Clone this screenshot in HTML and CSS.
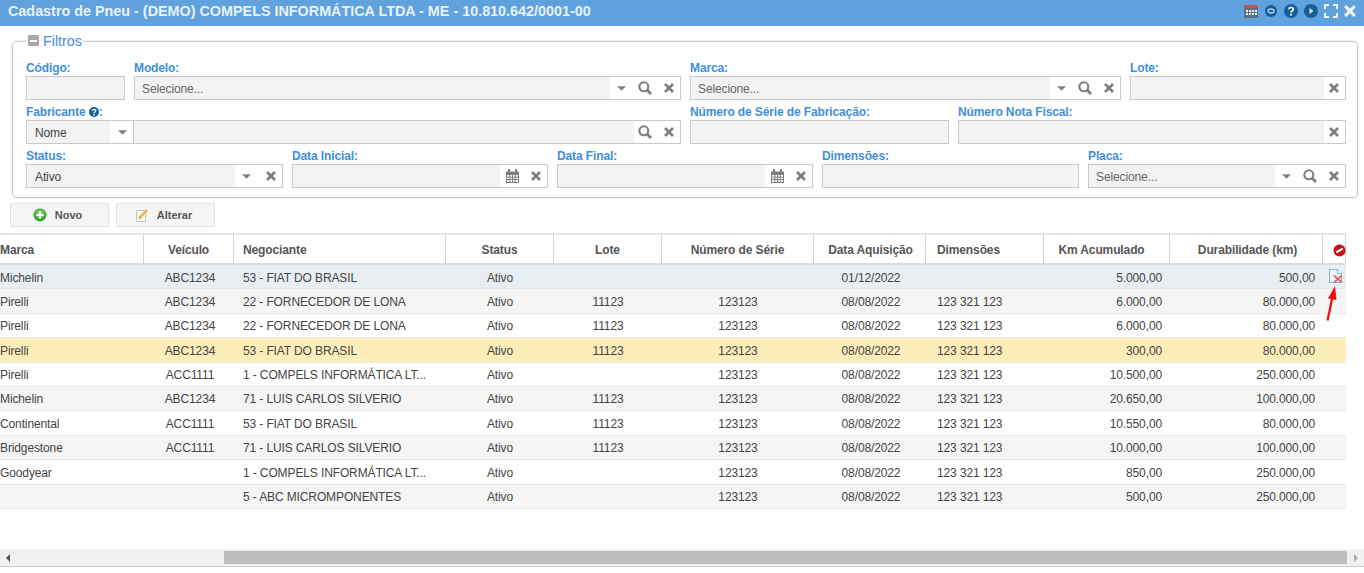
FILE: index.html
```html
<!DOCTYPE html>
<html lang="pt-BR">
<head>
<meta charset="utf-8">
<title>Cadastro de Pneu</title>
<link rel="stylesheet" href="styles.css">
</head>
<body>
<svg class="sprites" xmlns="http://www.w3.org/2000/svg">
  <symbol id="i-x" viewBox="0 0 10 10"><path d="M1 1l8 8M9 1l-8 8" fill="none" stroke="currentColor" stroke-width="2.700"/></symbol>
  <symbol id="i-search" viewBox="0 0 14 14"><circle cx="5.800" cy="5.800" r="4.500" fill="none" stroke="currentColor" stroke-width="2.100"/><path d="M9 9l4 4" stroke="currentColor" stroke-width="2.800"/></symbol>
  <symbol id="i-caret" viewBox="0 0 10 5"><path d="M0 0h10L5 5z" fill="currentColor"/></symbol>
  <symbol id="i-cal" viewBox="0 0 13 14"><path d="M0 2.500h13V14H0z" fill="currentColor"/><path d="M3 0v4M10 0v4" stroke="currentColor" stroke-width="2"/><path d="M1 6h11v7H1z" fill="#fff"/><path d="M1 8.200h11M1 10.500h11M3.800 6v7M6.500 6v7M9.200 6v7" stroke="currentColor"/></symbol>
</svg>

<header class="titlebar">
  <h1 class="title">Cadastro de Pneu - (DEMO) COMPELS INFORMÁTICA LTDA - ME - 10.810.642/0001-00</h1>
  <div class="title-tools">
    <svg class="tool" viewBox="0 0 14 14"><path d="M0 1h14v13H0z" fill="#5d6f80"/><path d="M0 1h14v3H0z" fill="#c8504f"/><path d="M2 6h2v2H2zM5 6h2v2H5zM8 6h2v2H8zM11 6h2v2h-2zM2 9h2v2H2zM5 9h2v2H5zM8 9h2v2H8zM11 9h2v2h-2z" fill="#e9eef2"/></svg>
    <svg class="tool" viewBox="0 0 14 14"><circle cx="7" cy="7" r="6" fill="#155f96"/><ellipse cx="7" cy="7" rx="3" ry="2" fill="none" stroke="#b7d6ec" stroke-width="1.300"/></svg>
    <svg class="tool" viewBox="0 0 14 14"><circle cx="7" cy="7" r="7" fill="#155f96"/><path d="M4.800 5.300C5 2.900 9.300 3 9.300 5.400 9.300 7 7 7 7 8.600" fill="none" stroke="#fff" stroke-width="1.600"/><path d="M6.100 9.700h1.800v1.700H6.100z" fill="#fff"/></svg>
    <svg class="tool" viewBox="0 0 14 14"><circle cx="7" cy="7" r="7" fill="#155f96"/><path d="M5.500 4l4 3-4 3z" fill="#d5e7f4"/></svg>
    <svg class="tool" viewBox="0 0 14 14"><path d="M1 5V1h4M9 1h4v4M13 9v4H9M5 13H1V9" fill="none" stroke="#eef4fa" stroke-width="2"/></svg>
    <svg class="tool tool-x" viewBox="0 0 10 10"><use href="#i-x"/></svg>
  </div>
</header>

<fieldset class="filters">
  <legend class="filters-legend"><span class="collapse"><span class="collapse-bar"></span></span>Filtros</legend>

  <div class="filter-row">
    <div class="field w-codigo"><label class="label">Código:</label><div class="input"></div></div>
    <div class="field w-modelo"><label class="label">Modelo:</label>
      <div class="input"><span class="value muted">Selecione...</span>
        <span class="addons addons-full"><svg class="ic-caret"><use href="#i-caret"/></svg><svg class="ic-search"><use href="#i-search"/></svg><svg class="ic-x"><use href="#i-x"/></svg></span></div></div>
    <div class="field w-marca"><label class="label">Marca:</label>
      <div class="input"><span class="value muted">Selecione...</span>
        <span class="addons addons-full"><svg class="ic-caret"><use href="#i-caret"/></svg><svg class="ic-search"><use href="#i-search"/></svg><svg class="ic-x"><use href="#i-x"/></svg></span></div></div>
    <div class="field w-lote"><label class="label">Lote:</label>
      <div class="input"><span class="addons"><svg class="ic-x"><use href="#i-x"/></svg></span></div></div>
  </div>

  <div class="filter-row">
    <div class="field w-modelo-full"><label class="label">Fabricante <svg class="help" viewBox="0 0 14 14"><circle cx="7" cy="7" r="7" fill="#155f96"/><path d="M4.500 5.300C4.700 2.600 9.500 2.700 9.500 5.300 9.500 7 7 7 7 8.600" fill="none" stroke="#fff" stroke-width="1.800"/><path d="M6 9.800h2v2H6z" fill="#fff"/></svg>:</label>
      <div class="combo">
        <div class="input input-type"><span class="value">Nome</span><span class="addons"><svg class="ic-caret"><use href="#i-caret"/></svg></span></div>
        <div class="input input-fill"><span class="addons addons-search"><svg class="ic-search"><use href="#i-search"/></svg><svg class="ic-x"><use href="#i-x"/></svg></span></div>
      </div></div>
    <div class="field w-serie"><label class="label">Número de Série de Fabricação:</label><div class="input"></div></div>
    <div class="field w-nota"><label class="label">Número Nota Fiscal:</label>
      <div class="input"><span class="addons"><svg class="ic-x"><use href="#i-x"/></svg></span></div></div>
  </div>

  <div class="filter-row">
    <div class="field w-status"><label class="label">Status:</label>
      <div class="input"><span class="value">Ativo</span><span class="addons addons-status"><svg class="ic-caret"><use href="#i-caret"/></svg><svg class="ic-x"><use href="#i-x"/></svg></span></div></div>
    <div class="field w-data"><label class="label">Data Inicial:</label>
      <div class="input"><span class="addons addons-date"><svg class="ic-cal"><use href="#i-cal"/></svg><svg class="ic-x"><use href="#i-x"/></svg></span></div></div>
    <div class="field w-data"><label class="label">Data Final:</label>
      <div class="input"><span class="addons addons-date"><svg class="ic-cal"><use href="#i-cal"/></svg><svg class="ic-x"><use href="#i-x"/></svg></span></div></div>
    <div class="field w-dim"><label class="label">Dimensões:</label><div class="input"></div></div>
    <div class="field w-placa"><label class="label">Placa:</label>
      <div class="input"><span class="value muted">Selecione...</span>
        <span class="addons addons-full"><svg class="ic-caret"><use href="#i-caret"/></svg><svg class="ic-search"><use href="#i-search"/></svg><svg class="ic-x"><use href="#i-x"/></svg></span></div></div>
  </div>
</fieldset>

<div class="actions">
  <button class="btn" type="button">
    <svg class="btn-ic" viewBox="0 0 14 14"><circle cx="7" cy="7" r="6.500" fill="#3fa535"/><circle cx="7" cy="6" r="4.500" fill="#7ed06a" opacity=".7"/><path d="M7 3.500v7M3.500 7h7" stroke="#fff" stroke-width="2.200"/></svg>Novo</button>
  <button class="btn" type="button">
    <svg class="btn-ic" viewBox="0 0 14 14"><path d="M1.500 2.500h9v11h-9z" fill="#fafafa" stroke="#c4c4c4"/><path d="M3.500 11l1-3L11 1l2 2-6.500 7z" fill="#edb850"/><path d="M3.500 11l1-3 2 2z" fill="#c98f3a"/></svg>Alterar</button>
</div>

<div class="grid">
  <table class="table">
    <colgroup>
      <col class="c1"><col class="c2"><col class="c3"><col class="c4"><col class="c5"><col class="c6"><col class="c7"><col class="c8"><col class="c9"><col class="c10"><col class="c11">
    </colgroup>
    <thead>
      <tr>
        <th class="left">Marca</th><th>Veículo</th><th class="left pad">Negociante</th><th>Status</th><th>Lote</th><th>Número de Série</th><th>Data Aquisição</th><th>Dimensões</th><th>Km Acumulado</th><th>Durabilidade (km)</th>
        <th><svg class="ic-block" viewBox="0 0 14 14"><circle cx="7" cy="7" r="6.500" fill="#c6101a"/><path d="M3.500 9L10.500 5" stroke="#fff" stroke-width="2.400"/></svg></th>
      </tr>
    </thead>
    <tbody>
      <tr class="selected"><td>Michelin</td><td class="c">ABC1234</td><td class="pad">53 - FIAT DO BRASIL</td><td class="c">Ativo</td><td class="c"></td><td class="c"></td><td class="c">01/12/2022</td><td></td><td class="r">5.000,00</td><td class="r">500,00</td>
        <td class="cell-ic"><svg class="ic-del" viewBox="0 0 14 14"><path d="M.5.500h8l4 4v9H.5z" fill="#eef3fb" stroke="#8fb0d8"/><path d="M8.500.500v4h4" fill="#fff" stroke="#8fb0d8"/><path d="M5 6.500l8 7M13 6.500l-8 7" stroke="#dc6a70" stroke-width="2"/></svg></td></tr>
      <tr class="alt"><td>Pirelli</td><td class="c">ABC1234</td><td class="pad">22 - FORNECEDOR DE LONA</td><td class="c">Ativo</td><td class="c">11123</td><td class="c">123123</td><td class="c">08/08/2022</td><td>123 321 123</td><td class="r">6.000,00</td><td class="r">80.000,00</td><td></td></tr>
      <tr><td>Pirelli</td><td class="c">ABC1234</td><td class="pad">22 - FORNECEDOR DE LONA</td><td class="c">Ativo</td><td class="c">11123</td><td class="c">123123</td><td class="c">08/08/2022</td><td>123 321 123</td><td class="r">6.000,00</td><td class="r">80.000,00</td><td></td></tr>
      <tr class="warn"><td>Pirelli</td><td class="c">ABC1234</td><td class="pad">53 - FIAT DO BRASIL</td><td class="c">Ativo</td><td class="c">11123</td><td class="c">123123</td><td class="c">08/08/2022</td><td>123 321 123</td><td class="r">300,00</td><td class="r">80.000,00</td><td></td></tr>
      <tr><td>Pirelli</td><td class="c">ACC1111</td><td class="pad">1 - COMPELS INFORMÁTICA LT...</td><td class="c">Ativo</td><td class="c"></td><td class="c">123123</td><td class="c">08/08/2022</td><td>123 321 123</td><td class="r">10.500,00</td><td class="r">250.000,00</td><td></td></tr>
      <tr class="alt"><td>Michelin</td><td class="c">ABC1234</td><td class="pad">71 - LUIS CARLOS SILVERIO</td><td class="c">Ativo</td><td class="c">11123</td><td class="c">123123</td><td class="c">08/08/2022</td><td>123 321 123</td><td class="r">20.650,00</td><td class="r">100.000,00</td><td></td></tr>
      <tr><td>Continental</td><td class="c">ACC1111</td><td class="pad">53 - FIAT DO BRASIL</td><td class="c">Ativo</td><td class="c">11123</td><td class="c">123123</td><td class="c">08/08/2022</td><td>123 321 123</td><td class="r">10.550,00</td><td class="r">80.000,00</td><td></td></tr>
      <tr class="alt"><td>Bridgestone</td><td class="c">ACC1111</td><td class="pad">71 - LUIS CARLOS SILVERIO</td><td class="c">Ativo</td><td class="c">11123</td><td class="c">123123</td><td class="c">08/08/2022</td><td>123 321 123</td><td class="r">10.000,00</td><td class="r">100.000,00</td><td></td></tr>
      <tr><td>Goodyear</td><td class="c"></td><td class="pad">1 - COMPELS INFORMÁTICA LT...</td><td class="c">Ativo</td><td class="c"></td><td class="c">123123</td><td class="c">08/08/2022</td><td>123 321 123</td><td class="r">850,00</td><td class="r">250.000,00</td><td></td></tr>
      <tr class="alt"><td></td><td class="c"></td><td class="pad">5 - ABC MICROMPONENTES</td><td class="c">Ativo</td><td class="c"></td><td class="c">123123</td><td class="c">08/08/2022</td><td>123 321 123</td><td class="r">500,00</td><td class="r">250.000,00</td><td></td></tr>
    </tbody>
  </table>
  <svg class="arrow" viewBox="0 0 14 35"><path d="M2.500 34.500L7.500 11" stroke="#f00a14" stroke-width="2.200" fill="none"/><path d="M10 0L3 12.500 11.500 14z" fill="#f00a14"/></svg>
</div>

<div class="hscroll">
  <span class="arrow-l"></span>
  <div class="track"><div class="thumb"></div></div>
  <span class="arrow-r"></span>
</div>
</body>
</html>
```
FILE: styles.css
```css
* { box-sizing: border-box; }
html, body { margin: 0; padding: 0; }
body {
  width: 1364px;
  height: 573px;
  overflow: hidden;
  background: #fff;
  font-family: "Liberation Sans", Arial, sans-serif;
  font-size: 12px;
  letter-spacing: -.12px;
  color: #444;
}
.sprites { display: none; }

.titlebar {
  height: 26px;
  background: #5fa2dd;
  display: flex;
  align-items: center;
  justify-content: space-between;
  padding: 0 8px 4px;
}
.title {
  margin: 0;
  font-size: 14.37px;
  font-weight: bold;
  letter-spacing: 0;
  color: #e9f1f9;
  white-space: nowrap;
}
.title-tools { display: flex; align-items: center; gap: 6px; }
.tool { width: 14px; height: 14px; display: block; }
.tool-x { width: 12px; height: 12px; color: #eef4fa; }

.filters {
  margin: 8px 6px 0 12px;
  padding: 7px 11px 0 13px;
  height: 164px;
  border: 1px solid #c9c9c9;
  border-radius: 5px;
  box-shadow: 0 0 2px rgba(0,0,0,.2);
  display: block;
  min-width: 0;
}
.filters-legend {
  padding: 0 1px 0 2px;
  margin-left: 0;
  font-size: 14.3px;
  letter-spacing: 0;
  color: #3f8fdc;
  line-height: 15px;
  display: flex;
  align-items: center;
  gap: 4px;
}
.collapse {
  width: 11px;
  height: 11px;
  background: #a8a8a8;
  border-radius: 1px;
  display: flex;
  align-items: center;
  justify-content: center;
  margin-top: -2px;
}
.collapse-bar { width: 7px; height: 2px; background: #fff; }

.filter-row { display: flex; gap: 9px; height: 44px; padding-top: 5px; }
.field { display: flex; flex-direction: column; flex: none; }
.label {
  height: 15px;
  line-height: 15px;
  font-size: 12px;
  font-weight: bold;
  color: #3f8fdc;
  white-space: nowrap;
  display: block;
}
.input {
  height: 24px;
  border: 1px solid #c9c9c9;
  background: #f3f3f3;
  display: flex;
  align-items: center;
}
.value { padding: 2px 0 0 8px; color: #444; flex: 1; white-space: nowrap; }
.muted { color: #666; padding-left: 7px; }
.addons {
  margin-left: auto;
  height: 22px;
  background: #fff;
  display: flex;
  align-items: center;
  padding: 0 6px 0 5px;
  color: #7f7f7f;
}
.addons svg { display: block; flex: none; }
.ic-caret { width: 9px; height: 5px; }
.ic-search { width: 14px; height: 14px; }
.ic-x { width: 10px; height: 10px; }
.ic-cal { width: 13px; height: 14px; }
.addons-full { width: 70px; padding: 0 6px 0 7px; justify-content: space-between; }
.addons-search { width: 46px; padding: 0 6px 0 4px; justify-content: space-between; }
.addons-date { width: 47px; padding: 0 6px; justify-content: space-between; }
.addons-status { width: 47px; padding: 0 6px 0 7px; justify-content: space-between; }

.w-codigo { width: 99px; }
.w-modelo { width: 547px; }
.w-marca { width: 431px; }
.w-lote { width: 216px; }
.w-modelo-full { width: 655px; }
.w-serie { width: 259px; }
.w-nota { width: 388px; }
.w-status { width: 257px; }
.w-data { width: 256px; }
.w-dim { width: 257px; }
.w-placa { width: 258px; }

.combo { display: flex; }
.input-type { width: 108px; flex: none; }
.input-type .addons { width: 23px; padding: 0 0 0 8px; }
.input-fill { flex: 1; border-left: 0; }
.help { width: 10px; height: 10px; vertical-align: -1px; }

.actions { display: flex; gap: 7px; padding: 5px 0 0 10px; }
.btn {
  width: 99px;
  height: 24px;
  background: #f5f5f5;
  border: 1px solid #e1e1e1;
  border-radius: 2px;
  font: bold 11px "Liberation Sans", Arial, sans-serif;
  color: #555;
  display: flex;
  align-items: center;
  justify-content: center;
  gap: 8px;
  padding: 0 4px 0 0;
}
.btn-ic { width: 14px; height: 14px; }

.grid { position: relative; margin-top: 6px; height: 316px; }
.table {
  table-layout: fixed;
  border-collapse: separate;
  border-spacing: 0;
  width: 1346px;
}
.c1 { width: 144px; } .c2 { width: 90px; } .c3 { width: 212px; } .c4 { width: 108px; }
.c5 { width: 108px; } .c6 { width: 152px; } .c7 { width: 112px; } .c8 { width: 118px; }
.c9 { width: 126px; } .c10 { width: 153px; } .c11 { width: 23px; }

th {
  height: 32px;
  font-size: 12px;
  font-weight: bold;
  color: #555;
  text-align: center;
  border-top: 2px solid #e4e4e4;
  border-bottom: 2px solid #dcdcdc;
  border-right: 1px solid #d4d4d4;
  padding: 2px 0 0;
  background: #fff;
}
th.left { text-align: left; }
th.pad { padding-left: 9px; }
th:nth-child(8), td:nth-child(8) { padding-left: 11px; text-align: left; }
th:nth-child(9) { padding-right: 10px; }
th:nth-child(10) { padding-left: 3px; }
th:nth-child(7), td:nth-child(7), td:nth-child(2) { padding-left: 2px; }
td {
  height: 24.4px;
  padding: 1.7px 0 0;
  font-size: 12px;
  color: #444;
  border-bottom: 1px solid #e9e9e9;
  white-space: nowrap;
  overflow: hidden;
}
td.c { text-align: center; }
td.r { text-align: right; padding-right: 8px; }
td.pad { padding-left: 9px; }
tr.selected td { background: #e9eef3; }
tr.alt td { background: #f5f5f5; }
tr.warn td { background: #fdedb9; }
.ic-block { width: 13px; height: 13px; display: block; margin-left: 10px; }
.ic-del { width: 14px; height: 14px; display: block; margin-left: 6px; margin-top: -4px; }
.arrow { position: absolute; left: 1325px; top: 53px; width: 14px; height: 35px; }

.hscroll {
  height: 18px;
  background: #f1f1f1;
  border-bottom: 1px solid #ccc;
  display: flex;
  align-items: center;
}
.arrow-l, .arrow-r { width: 0; height: 0; border-style: solid; flex: none; }
.arrow-l { border-width: 4px 4px 4px 0; border-color: transparent #555 transparent transparent; margin: 0 6px; }
.arrow-r { border-width: 4px 0 4px 4px; border-color: transparent transparent transparent #aaa; margin: 0 6px 0 7px; }
.track { flex: 1; height: 13px; padding-left: 208px; }
.thumb { height: 13px; background: #bdbdbd; }
```
